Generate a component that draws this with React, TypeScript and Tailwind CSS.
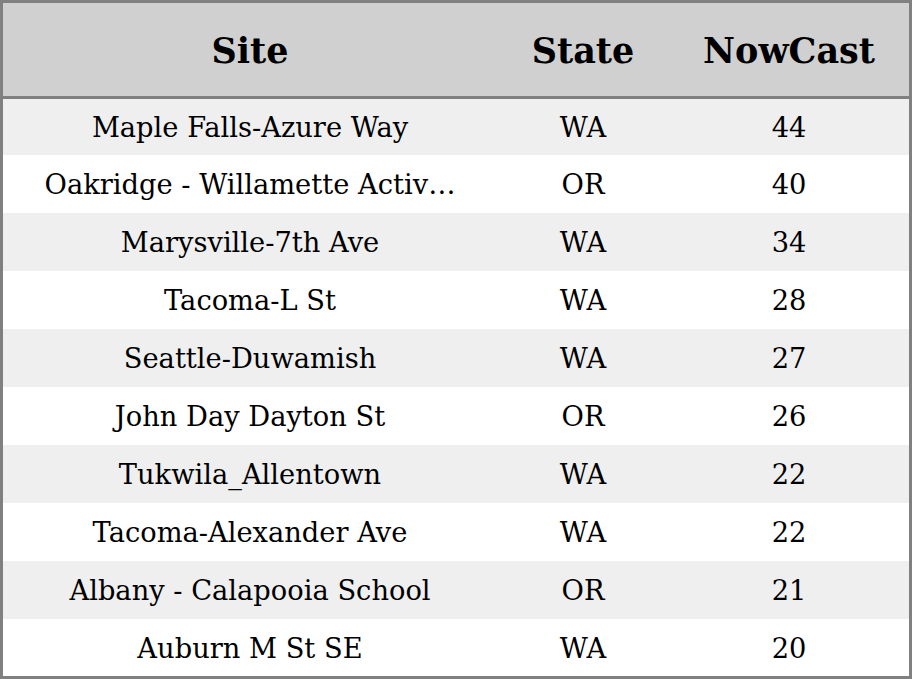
import React from "react";

const rows: [string, string, string][] = [
  ["Maple Falls-Azure Way", "WA", "44"],
  ["Oakridge - Willamette Activ…", "OR", "40"],
  ["Marysville-7th Ave", "WA", "34"],
  ["Tacoma-L St", "WA", "28"],
  ["Seattle-Duwamish", "WA", "27"],
  ["John Day Dayton St", "OR", "26"],
  ["Tukwila_Allentown", "WA", "22"],
  ["Tacoma-Alexander Ave", "WA", "22"],
  ["Albany - Calapooia School", "OR", "21"],
  ["Auburn M St SE", "WA", "20"],
];

export default function App() {
  return (
    <div
      className="w-[912px] h-[679px] border-[3px] border-[#808080] bg-white text-black flex flex-col overflow-hidden"
      style={{ fontFamily: '"DejaVu Serif", serif' }}
    >
      <div className="flex h-[96px] shrink-0 pt-[4px] bg-[#d0d0d0] border-b-[3px] border-[#808080] font-bold text-[35px]">
        <div className="w-[494px] flex items-center justify-center">Site</div>
        <div className="w-[172px] flex items-center justify-center">State</div>
        <div className="flex-1 flex items-center justify-center">NowCast</div>
      </div>
      {rows.map((r, i) => (
        <div
          key={i}
          className={`flex shrink-0 text-[27.3px] ${i === 0 ? "h-[56px] pt-[2px]" : i === 9 ? "h-[57px] pt-[3px]" : "h-[58px] pt-[3px]"} ${i % 2 === 0 ? "bg-[#efefef]" : "bg-white"}`}
        >
          <div className="w-[494px] flex items-center justify-center whitespace-nowrap">{r[0]}</div>
          <div className="w-[172px] flex items-center justify-center">{r[1]}</div>
          <div className="flex-1 flex items-center justify-center">{r[2]}</div>
        </div>
      ))}
    </div>
  );
}
